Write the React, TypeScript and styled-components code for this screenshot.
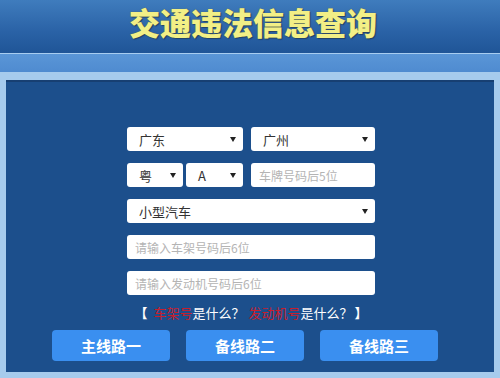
import styled, { createGlobalStyle } from 'styled-components'

const GlobalStyle = createGlobalStyle`
  html, body {
    margin: 0;
    padding: 0;
    background: #a6cbed;
  }
  body {
    font-family: 'Noto Sans CJK SC', 'Noto Sans', sans-serif;
  }
`

type SelectProps = { label: string }
type InputProps = { placeholder: string }

const Select = ({ label }: SelectProps) => (
  <SelectBox>
    <span>{label}</span>
    <Arrow />
  </SelectBox>
)

const Field = ({ placeholder }: InputProps) => <InputBox placeholder={placeholder} />

export default function App() {
  return (
    <Page>
      <GlobalStyle />
      <Header>
        <Title>交通违法信息查询</Title>
      </Header>
      <Band />
      <Body>
        <Panel>
          <Form>
            <Row $cols="116px 124px">
              <Select label="广东" />
              <Select label="广州" />
            </Row>
            <Row $cols="116px 124px">
              <Pair>
                <Select label="粤" />
                <Select label="A" />
              </Pair>
              <Field placeholder="车牌号码后5位" />
            </Row>
            <Select label="小型汽车" />
            <Field placeholder="请输入车架号码后6位" />
            <Field placeholder="请输入发动机号码后6位" />
          </Form>
          <Hint>
            <Bracket>【</Bracket>
            <Red>车架号</Red>是什么？
            <Red>发动机号</Red>是什么？
            <Bracket>】</Bracket>
          </Hint>
          <Buttons>
            <RouteButton>主线路一</RouteButton>
            <RouteButton>备线路二</RouteButton>
            <RouteButton>备线路三</RouteButton>
          </Buttons>
        </Panel>
      </Body>
    </Page>
  )
}

const Page = styled.div`
  width: 500px;
  height: 378px;
  overflow: hidden;
  display: flex;
  flex-direction: column;
  background: #a6cbed;
`

const Header = styled.header`
  height: 53px;
  flex-shrink: 0;
  border-bottom: 1px solid #a8cdf0;
  background: linear-gradient(#3f7cbd, #2a62a6 60%, #1f5597);
  display: flex;
  justify-content: center;
  align-items: flex-start;
`

const Title = styled.h1`
  margin: 0;
  margin-left: 6px;
  line-height: 44px;
  font-size: 31px;
  font-weight: 900;
  color: #f2ef86;
  text-shadow: 0 0 1px #6b6a30, 1px 1px 1px #1c3d6e;
`

const Band = styled.div`
  height: 18px;
  flex-shrink: 0;
  background: linear-gradient(#5a96d7, #4f8bd0);
`

const Body = styled.div`
  flex: 1;
  padding: 8px 6px 6px;
  display: flex;
`

const Panel = styled.div`
  flex: 1;
  background: #1c4f8c;
  border-top: 2px solid #173f72;
  padding-top: 45px;
  display: flex;
  flex-direction: column;
  align-items: center;
`

const Form = styled.div`
  width: 248px;
  margin-left: 2px;
  display: flex;
  flex-direction: column;
  gap: 12px;
`

const Row = styled.div<{ $cols: string }>`
  display: grid;
  grid-template-columns: ${(p) => p.$cols};
  column-gap: 8px;
`

const Pair = styled.div`
  display: grid;
  grid-template-columns: 56px 57px;
  column-gap: 3px;
`

const SelectBox = styled.div`
  height: 24px;
  box-sizing: border-box;
  background: #fff;
  border-radius: 3px;
  padding: 0 7px 0 12px;
  display: flex;
  align-items: center;
  justify-content: space-between;
  font-size: 13px;
  color: #333;
`

const Arrow = styled.i`
  width: 0;
  height: 0;
  border-left: 3px solid transparent;
  border-right: 3px solid transparent;
  border-top: 5px solid #222;
`

const InputBox = styled.input`
  height: 24px;
  box-sizing: border-box;
  width: 100%;
  border: none;
  border-radius: 3px;
  padding: 0 8px;
  font-family: 'Noto Sans CJK SC', sans-serif;
  font-size: 12px;
  outline: none;
  &::placeholder {
    color: #b4b4b4;
  }
`

const Hint = styled.div`
  margin-top: 9px;
  margin-left: 2px;
  font-size: 13px;
  line-height: 18px;
  color: #fff;
`

const Bracket = styled.b`
  font-weight: 700;
  margin: 0 2px;
`

const Red = styled.span`
  color: #c81e2c;
  margin-left: 4px;
`

const Buttons = styled.div`
  margin-top: 8px;
  margin-right: 10px;
  display: flex;
  gap: 16px;
`

const RouteButton = styled.button`
  width: 118px;
  height: 31px;
  border: none;
  border-radius: 4px;
  background: #3a8ff0;
  color: #fff;
  font-family: 'Noto Sans CJK SC', sans-serif;
  font-size: 15px;
  font-weight: 700;
  padding: 0;
`
